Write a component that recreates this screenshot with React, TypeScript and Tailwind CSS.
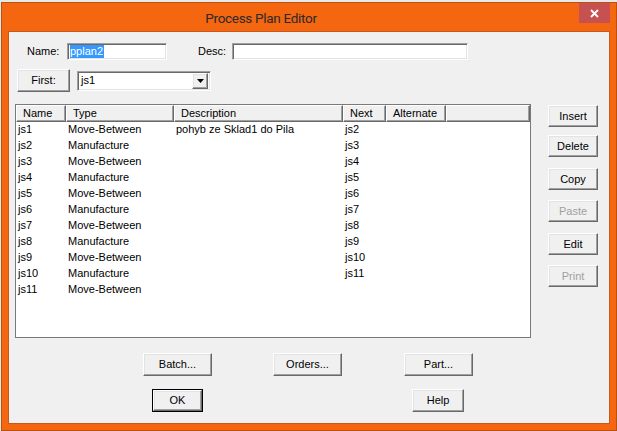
import React from "react";

const rows = [
  ["js1", "Move-Between", "pohyb ze Sklad1 do Pila", "js2"],
  ["js2", "Manufacture", "", "js3"],
  ["js3", "Move-Between", "", "js4"],
  ["js4", "Manufacture", "", "js5"],
  ["js5", "Move-Between", "", "js6"],
  ["js6", "Manufacture", "", "js7"],
  ["js7", "Move-Between", "", "js8"],
  ["js8", "Manufacture", "", "js9"],
  ["js9", "Move-Between", "", "js10"],
  ["js10", "Manufacture", "", "js11"],
  ["js11", "Move-Between", "", ""],
];

const btn =
  "flex items-center justify-center bg-[#f0f0f0] border border-t-white border-l-white border-r-[#696969] border-b-[#696969] shadow-[inset_-1px_-1px_0_#a0a0a0,inset_1px_1px_0_#e3e3e3]";

function Btn({ label, className = "", disabled = false }: { label: string; className?: string; disabled?: boolean }) {
  return (
    <div className={`${btn} ${disabled ? "text-[#a0a0a0]" : "text-black"} ${className}`}>
      {label}
    </div>
  );
}

const sunken =
  "bg-white border border-t-[#a0a0a0] border-l-[#a0a0a0] border-r-white border-b-white shadow-[inset_1px_1px_0_#696969,inset_-1px_-1px_0_#e3e3e3]";

const head =
  "h-full flex items-center pl-[6px] bg-[#f0f0f0] border border-t-white border-l-white border-r-[#696969] border-b-[#696969] shadow-[inset_-1px_-1px_0_#a0a0a0]";

export default function App() {
  return (
    <div className="w-[617px] h-[431px] bg-[#e8e8e8] overflow-hidden">
      <div className="ml-[1px] mt-[2px] w-[616px] h-[429px] bg-[#f4660f] border border-[#b9520f] flex flex-col">
        {/* title bar */}
        <div className="h-[28px] flex">
          <div className="w-[518px] pt-[5px] text-center text-[13.5px] tracking-[-0.3px] text-[#2a2a2a] font-['Roboto',sans-serif]">
            Process Plan Editor
          </div>
          <div className="ml-[59px] w-[31px] h-[20px] bg-[#c75050] flex items-center justify-center">
            <svg width="9" height="9" viewBox="0 0 9 9">
              <path d="M1 1 L8 8 M8 1 L1 8" stroke="white" strokeWidth="1.8" />
            </svg>
          </div>
        </div>

        {/* client */}
        <div className="ml-[6px] w-[602px] h-[393px] border border-[#c8581b] bg-[#f0f0f0] text-[11px] text-black font-['Liberation_Sans',Arial,sans-serif]">
          <div className="flex items-center h-[17px] mt-[11px] pl-[18px]">
            <span className="w-[40px]">Name:</span>
            <div className={`${sunken} w-[100px] h-[17px] flex items-center pl-[2px]`}>
              <span className="bg-[#3399ff] text-white h-[13px] leading-[13px] pr-[1px]">pplan2</span>
            </div>
            <span className="ml-[31px] w-[34px]">Desc:</span>
            <div className={`${sunken} w-[236px] h-[17px]`} />
          </div>

          <div className="flex items-center h-[23px] mt-[9px] pl-[8px]">
            <Btn label="First:" className="w-[53px] h-[23px]" />
            <div className={`${sunken} ml-[7px] w-[134px] h-[20px] flex items-center pl-[3px] pr-[2px]`}>
              <span className="flex-1">js1</span>
              <div className={`${btn} w-[16px] h-[16px]`}>
                <svg width="7" height="4" viewBox="0 0 7 4">
                  <path d="M0 0 H7 L3.5 4 Z" fill="black" />
                </svg>
              </div>
            </div>
          </div>

          <div className="flex mt-[12px]">
            <div className="ml-[6px] w-[516px] h-[234px] bg-white border border-[#7a7a7a]">
              <div className="flex h-[17px]">
                <div className={`${head} w-[50px]`}>Name</div>
                <div className={`${head} w-[108px]`}>Type</div>
                <div className={`${head} w-[169px]`}>Description</div>
                <div className={`${head} w-[43px]`}>Next</div>
                <div className={`${head} w-[60px]`}>Alternate</div>
                <div className={`${head} flex-1`} />
              </div>
              {rows.map((r) => (
                <div key={r[0]} className="flex h-[16px] items-center -translate-y-[1px]">
                  <span className="w-[50px] pl-[2px]">{r[0]}</span>
                  <span className="w-[108px] pl-[2px]">{r[1]}</span>
                  <span className="w-[169px] pl-[2px]">{r[2]}</span>
                  <span className="w-[43px] pl-[2px]">{r[3]}</span>
                </div>
              ))}
            </div>

            <div className="ml-[17px] w-[50px] pt-[1px] flex flex-col">
              <Btn label="Insert" className="h-[22px]" />
              <Btn label="Delete" className="h-[22px] mt-[8px]" />
              <Btn label="Copy" className="h-[22px] mt-[11px]" />
              <Btn label="Paste" disabled className="h-[22px] mt-[10px]" />
              <Btn label="Edit" className="h-[22px] mt-[11px]" />
              <Btn label="Print" disabled className="h-[22px] mt-[10px]" />
            </div>
          </div>

          <div className="flex mt-[15px] pl-[134px]">
            <Btn label="Batch..." className="w-[69px] h-[23px]" />
            <Btn label="Orders..." className="w-[69px] h-[23px] ml-[61px]" />
            <Btn label="Part..." className="w-[69px] h-[23px] ml-[62px]" />
          </div>

          <div className="flex mt-[13px] pl-[143px]">
            <div className="w-[51px] h-[23px] border border-black">
              <Btn label="OK" className="w-full h-full" />
            </div>
            <Btn label="Help" className="w-[52px] h-[23px] ml-[209px]" />
          </div>
        </div>
      </div>
    </div>
  );
}
